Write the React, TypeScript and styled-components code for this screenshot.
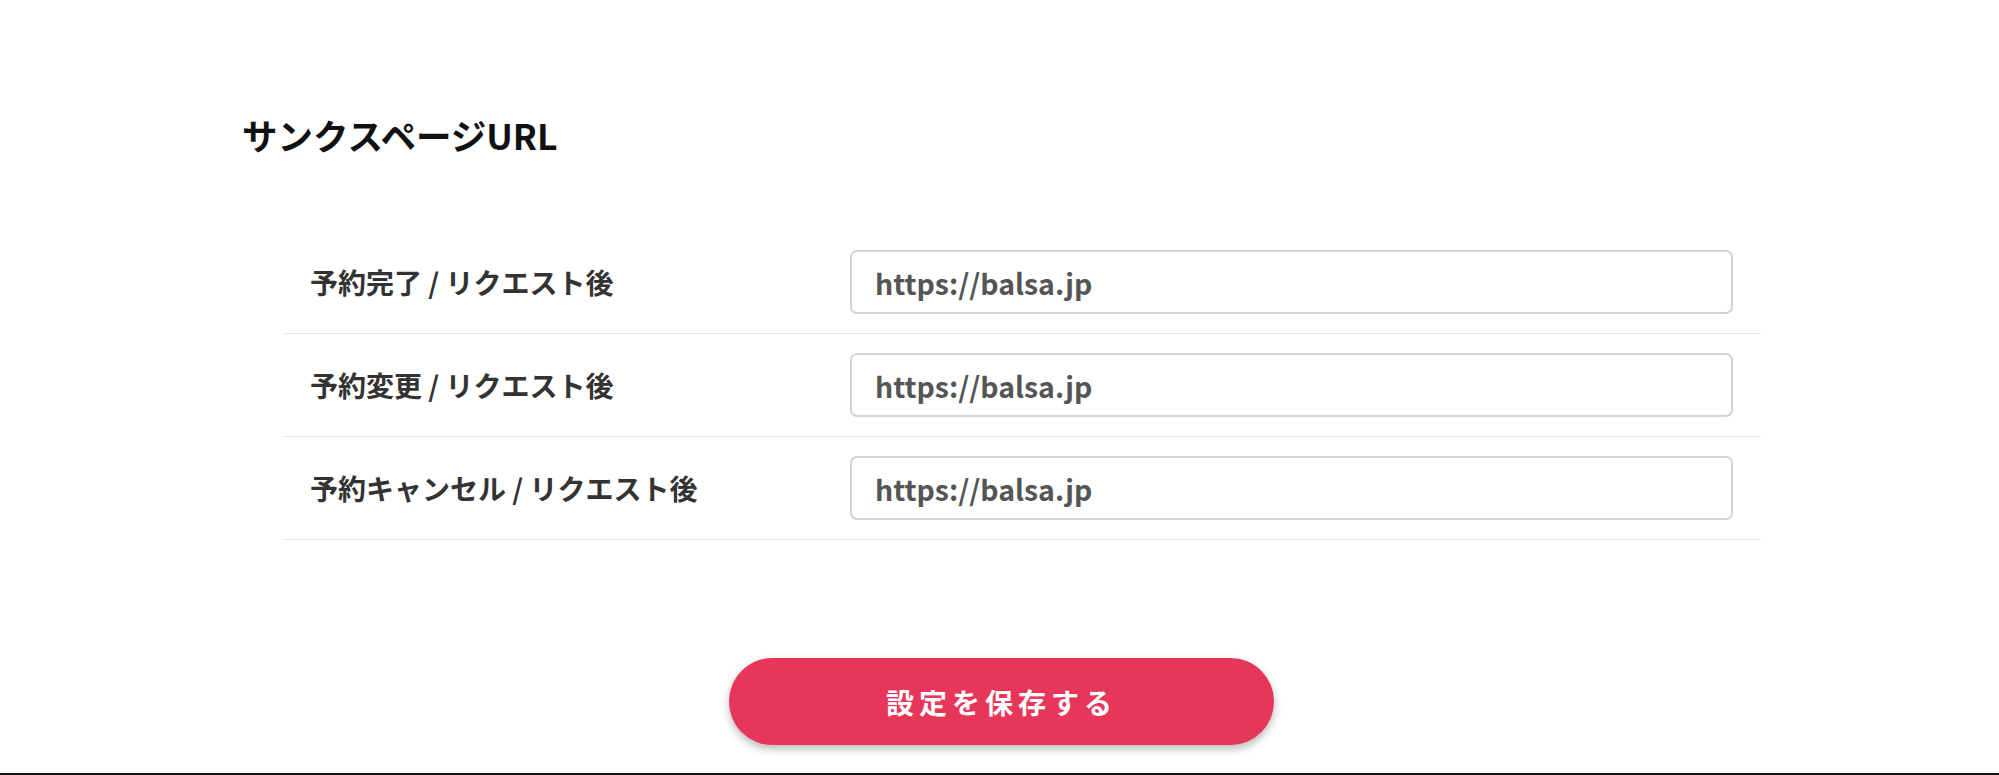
import React from "react";
import styled, { createGlobalStyle } from "styled-components";

const GlobalStyle = createGlobalStyle`
  html, body {
    margin: 0;
    padding: 0;
    background: #ffffff;
  }
  body {
    font-family: "Noto Sans CJK JP", "Noto Sans", sans-serif;
  }
  * {
    box-sizing: border-box;
  }
`;

const Page = styled.div`
  height: 775px;
  border-bottom: 2px solid #111;
  display: flex;
  flex-direction: column;
`;

const Section = styled.section`
  padding: 107px 238px 0 242px;
`;

const Title = styled.h2`
  margin: 0;
  font-size: 35.5px;
  line-height: 56px;
  font-weight: 700;
  color: #111;
`;

const Table = styled.div`
  margin: 68px 0 0 41px;
  display: flex;
  flex-direction: column;
`;

const Row = styled.div`
  display: grid;
  grid-template-columns: 540px 1fr;
  align-items: center;
  padding: 19px 28px 19px 27px;
  border-bottom: 1px solid #e8e8e8;
`;

const Label = styled.label`
  font-size: 28px;
  font-weight: 700;
  color: #333;
  white-space: pre;
`;

const UrlInput = styled.input`
  width: 100%;
  height: 64px;
  padding: 0 23px;
  border: 2px solid #d3d3d3;
  border-radius: 7px;
  background: #fff;
  font-family: "Noto Sans CJK JP", "Noto Sans", sans-serif;
  font-size: 28.5px;
  font-weight: 700;
  color: #555;
  outline: none;
`;

const Footer = styled.div`
  display: flex;
  justify-content: center;
  padding: 118px 0 0 4px;
`;

const SaveButton = styled.button`
  width: 545px;
  height: 87px;
  border: none;
  border-radius: 44px;
  background: #e6375a;
  box-shadow: 0 4px 8px rgba(0, 0, 0, 0.28);
  color: #fff;
  font-family: "Noto Sans CJK JP", "Noto Sans", sans-serif;
  font-size: 28px;
  font-weight: 700;
  letter-spacing: 5px;
  cursor: pointer;
`;

const rows = [
  "予約完了 / リクエスト後",
  "予約変更 / リクエスト後",
  "予約キャンセル / リクエスト後",
];

export default function App() {
  return (
    <>
      <GlobalStyle />
      <Page>
        <Section>
          <Title>サンクスページURL</Title>
          <Table>
            {rows.map((label) => (
              <Row key={label}>
                <Label>{label}</Label>
                <UrlInput type="text" defaultValue="https://balsa.jp" />
              </Row>
            ))}
          </Table>
        </Section>
        <Footer>
          <SaveButton>設定を保存する</SaveButton>
        </Footer>
      </Page>
    </>
  );
}
